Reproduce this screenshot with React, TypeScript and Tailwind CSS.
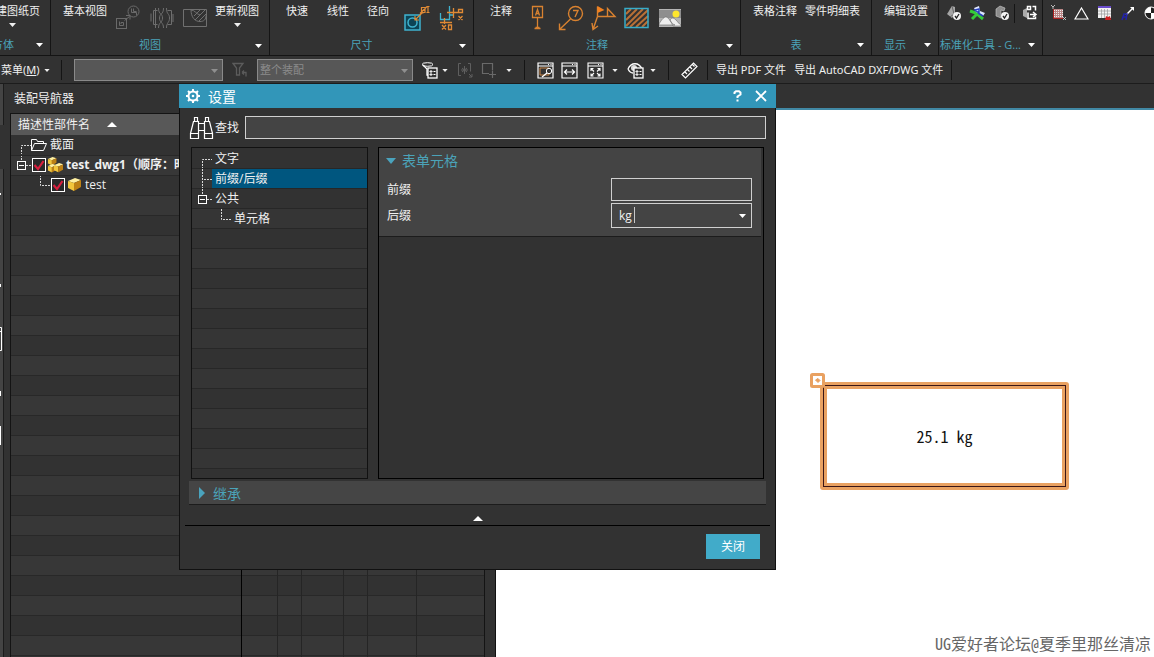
import React from "react";

type Kids = { children?: React.ReactNode };

function Svg({ w, h, children, className = "" }: Kids & { w: number; h: number; className?: string }) {
  return (
    <svg width={w} height={h} viewBox={`0 0 ${w} ${h}`} fill="none" aria-hidden="true" className={`shrink-0 ${className}`}>
      {children}
    </svg>
  );
}

function Down({ className = "" }: { className?: string }) {
  return (
    <Svg w={7} h={4} className={className}>
      <path d="M0 0h7L3.5 4z" fill="currentColor" />
    </Svg>
  );
}

/* ---------- ribbon ---------- */

function Group({ label, width, clip = false, children }: Kids & { label: string; width: string; clip?: boolean }) {
  return (
    <section aria-label={label} className={`flex shrink-0 flex-col overflow-hidden border-r border-[#151515] ${width}`}>
      <div className={`flex h-9 items-start ${clip ? "justify-end" : ""}`}>{children}</div>
      <div className={`flex h-5 items-center text-[#4ba3b9] ${clip ? "justify-end" : ""}`}>
        <span className={clip ? "mr-[15px]" : "flex-1 pl-px text-center"}>{label}</span>
        <button type="button" aria-label={`${label}选项`} className="flex h-full w-[21px] shrink-0 items-center justify-center text-white">
          <Down />
        </button>
      </div>
    </section>
  );
}

function TextButton({ text, arrow = false, className = "" }: { text: string; arrow?: boolean; className?: string }) {
  return (
    <button type="button" className={`flex shrink-0 flex-col items-center pt-[3px] leading-4 ${className}`}>
      {text}
      {arrow && <Down className="mt-1" />}
    </button>
  );
}

function IconButton({ name, className = "", children }: Kids & { name: string; className?: string }) {
  return (
    <button type="button" aria-label={name} className={`flex shrink-0 items-center justify-center ${className}`}>
      {children}
    </button>
  );
}

function Ribbon() {
  return (
    <div className="flex h-14 shrink-0 overflow-hidden border-b border-[#141414]">
      <Group label="方体" width="w-[51px]" clip>
        <TextButton text="新建图纸页" arrow className="mr-[10px]" />
      </Group>

      <Group label="视图" width="w-[219px]">
        <TextButton text="基本视图" className="ml-3" />
        <IconButton name="投影视图" className="ml-[3px] h-9 w-9">
          <Svg w={26} h={26}>
            <g stroke="#6a6a6a">
              <rect x="1.5" y="13.500" width="10" height="10" />
              <path d="M4.500 16.500v4h4v-3h-2.500v1.500M9.500 15.500l5-4M11 10.500h4v4" />
              <circle cx="18.500" cy="6.500" r="5.500" />
              <path d="M16.500 3.500v4h5v3M18.500 3.500v3h3" />
            </g>
          </Svg>
        </IconButton>
        <IconButton name="局部放大图" className="h-9 w-8">
          <Svg w={24} h={24}>
            <path d="M7.500 4.500h-4v14h4M1 7.500v8M5.500 2v20M8.500 2c0 7 4 5 4 10s-4 4-4 10M13.500 2c0 7-4 5-4 10s4 4 4 10M16.500 2c0 7 3 5 3 10s-3 4-3 10M17.500 4.500h4v14h-4M23 8v8" stroke="#6e6e6e" />
          </Svg>
        </IconButton>
        <IconButton name="剖视图" className="h-9 w-[34px]">
          <Svg w={26} h={20}>
            <path d="M1.500 1.500h23v17h-23zM9 1.500c0 8 4 12 9 12 4 0 6-2 6-6M12 8l6-6M13 12l10-10M17 13l7-7M9 2c4 0 5 4 9 5" stroke="#707070" />
          </Svg>
        </IconButton>
        <TextButton text="更新视图" arrow className="ml-[3px]" />
      </Group>

      <Group label="尺寸" width="w-[204px]">
        <TextButton text="快速" className="ml-4" />
        <TextButton text="线性" className="ml-[19px]" />
        <TextButton text="径向" className="ml-[18px]" />
        <IconButton name="孔尺寸" className="ml-[10px] h-9 w-9">
          <Svg w={26} h={26}>
            <rect x="1" y="10" width="15" height="15" fill="#0d4455" stroke="#3fb3cf" strokeWidth="1.500" />
            <circle cx="8.500" cy="17.500" r="4.500" stroke="#3fb3cf" strokeWidth="1.500" />
            <path d="M11 15l7-7M11 11v4h4M17.500 8h2M16 8.500l7-7M17.500 2.500h3.500v5h-3.500zM22.500 1.500h3M24 1.500v6M22.500 7.500h3" stroke="#e08a35" strokeWidth="1.200" />
          </Svg>
        </IconButton>
        <IconButton name="坐标尺寸" className="h-9 w-[34px]">
          <Svg w={26} h={26}>
            <path d="M1.500 8v6.500h9V1M10.500 10h4" stroke="#3fb3cf" strokeWidth="1.300" />
            <path d="M8 7.500h12M14.500 3v10M5.500 13v6M1 17.500h12M3 20l4 4.500M7 20l-4 4.500M9.500 20h3v4.500h-3zM19.500 4.500h4v3h-4zM19.500 11l4 4M23.500 11l-4 4" stroke="#e08a35" strokeWidth="1.300" />
          </Svg>
        </IconButton>
      </Group>

      <Group label="注释" width="w-[267px]">
        <TextButton text="注释" className="ml-4" />
        <IconButton name="基准特征符号" className="ml-[10px] h-9 w-8">
          <Svg w={14} h={26}>
            <path d="M1.500 1.500h10v11h-10zM6.500 12.500v11M3.500 23.500h6M4.500 22.500h4M4.500 10.500l2-6 2 6M5 8.500h3" stroke="#d98230" strokeWidth="1.300" />
          </Svg>
        </IconButton>
        <IconButton name="符号标注" className="h-9 w-[34px]">
          <Svg w={26} h={26}>
            <circle cx="17.500" cy="8.500" r="7" stroke="#d98230" strokeWidth="1.400" />
            <path d="M12.500 14L1.500 24.500M1.500 18.500v6h6M15 5.500h5l-3 6.500" stroke="#d98230" strokeWidth="1.400" />
          </Svg>
        </IconButton>
        <IconButton name="焊接符号" className="h-9 w-8">
          <Svg w={26} h={26}>
            <path d="M7 11.500H24L16.500 3.500v8M6.500 11.500L2 24.500M1 18l1 6.500 5-3.500M6.500 11.500v-10" stroke="#d98230" strokeWidth="1.400" />
            <path d="M6.500 1l7 4-7 3z" fill="#f08020" />
          </Svg>
        </IconButton>
        <IconButton name="剖面线" className="h-9 w-[34px]">
          <Svg w={26} h={22}>
            <path d="M2 7l5-5M2 13L13 2M2 19L19 2M6 20L24 3M12 20L24 9M18 20l6-6" stroke="#b97036" strokeWidth="2" />
            <rect x="1" y="1.500" width="23" height="19" stroke="#38adc9" strokeWidth="1.500" />
          </Svg>
        </IconButton>
        <IconButton name="图像" className="h-9 w-8">
          <Svg w={22} h={18}>
            <rect width="22" height="18" fill="#b4b4b4" />
            <rect y="1" width="22" height="8" fill="#8e8e8e" />
            <circle cx="17" cy="5" r="3.500" fill="#ffe62e" />
            <path d="M0 15c3-5 5-7 7-7 3 0 5 7 9 8H0zM11 11c2-3 4-2 6 0 2 2 3 4 5 5v1H14z" fill="#eee" stroke="#666" strokeWidth=".6" />
          </Svg>
        </IconButton>
      </Group>

      <Group label="表" width="w-[131px]">
        <TextButton text="表格注释" className="ml-3" />
        <TextButton text="零件明细表" className="ml-2" />
      </Group>

      <Group label="显示" width="w-[67px]">
        <TextButton text="编辑设置" className="ml-3" />
      </Group>

      <Group label="标准化工具 - G..." width="w-[104px]">
        <IconButton name="检查制图标准" className="ml-[3px] h-[26px] w-6">
          <Svg w={16} h={16}>
            <path d="M1 9C3 6 4 4 6 1l3 1v7l-3 4z" fill="#a5a5a5" />
            <path d="M6 1l2 8-4 3" stroke="#666" />
            <circle cx="11" cy="11" r="4" fill="#f4f4f4" />
            <path d="M9 11l1.500 2 2.500-4" stroke="#222" strokeWidth="1.300" />
          </Svg>
        </IconButton>
        <IconButton name="装配工具" className="h-[26px] w-6">
          <Svg w={18} h={16}>
            <path d="M1 6l6 2 7 6M3 14l6-6" stroke="#35c93a" strokeWidth="3" />
            <path d="M5 3l5-2 1 5 5 2-2 3-7-4z" fill="#dfe8ff" />
            <path d="M6 5l4-1v4zM9 8l5 3" stroke="#2741bd" strokeWidth="1.500" />
          </Svg>
        </IconButton>
        <IconButton name="检查部件" className="h-[26px] w-6">
          <Svg w={16} h={16}>
            <path d="M2 4l4-3 5 2-1 3-3-1v8L2 11z" fill="#8c8c8c" stroke="#ccc" strokeWidth=".6" />
            <circle cx="11" cy="11" r="4" fill="#f4f4f4" />
            <path d="M9 11l1.500 2 2.500-4" stroke="#222" strokeWidth="1.300" />
          </Svg>
        </IconButton>
        <span className="mt-1 h-[19px] w-px bg-[#151515]" />
        <IconButton name="替换模板" className="ml-[2px] h-[26px] w-[25px]">
          <Svg w={16} h={16}>
            <path d="M5 3L1 5v6l4 2z" fill="#aaa" />
            <path d="M5.500 1.500h3v3h-3zM10.500 1.500h3v4M6 7.500v6h7.500v-2M8 9.500h5M11 7l3 2.500-3 2.500" stroke="#fff" strokeWidth="1.500" />
          </Svg>
        </IconButton>
      </Group>

      <div className="flex h-[26px] min-w-0 flex-1 items-center overflow-hidden">
        <IconButton name="点阵" className="ml-[3px] w-6">
          <Svg w={15} h={16}>
            <path d="M0 0l2 2 2-2M2 2v2M12 12l3 3M15 12l-3 3" stroke="#ddd" strokeWidth=".8" />
            <rect x="3" y="4" width="9" height="9" fill="#b88" />
            <path d="M3 5.500h9M3 7.500h9M3 9.500h9M3 11.500h9" stroke="#eee" strokeDasharray="1 1" />
            <path d="M2.500 4v9.500H12" stroke="#a22" />
          </Svg>
        </IconButton>
        <IconButton name="三角形" className="w-[23px]">
          <Svg w={15} h={13}>
            <path d="M7.500 1l6.500 11H1z" stroke="#fff" strokeWidth="1.200" />
          </Svg>
        </IconButton>
        <IconButton name="表格" className="w-[23px]">
          <Svg w={14} h={15}>
            <rect width="13" height="12" fill="#f3f3f3" />
            <rect width="13" height="2" fill="#6a4ccc" />
            <path d="M0 5h13M0 8h13M3.500 3v9M6.500 3v9M9.500 3v9" stroke="#999" strokeWidth=".7" />
            <path d="M7 14l1-4 2 1 2-1 1 4z" fill="#c22" />
          </Svg>
        </IconButton>
        <IconButton name="引线" className="w-[23px]">
          <Svg w={14} h={15}>
            <path d="M5 9l7-7" stroke="#fff" strokeWidth="1.500" />
            <path d="M9 1h4v4z" fill="#fff" />
            <path d="M1 14L3 8h3l-1 6M2 11h4" stroke="#2222a8" strokeWidth="1.500" />
          </Svg>
        </IconButton>
        <IconButton name="重心" className="w-[23px]">
          <Svg w={14} h={14}>
            <circle cx="7" cy="7" r="6" fill="#fff" stroke="#fff" />
            <path d="M7 7V1.500A5.500 5.500 0 0 1 12.500 7zM7 7v5.500A5.500 5.500 0 0 1 1.500 7z" fill="#222" />
          </Svg>
        </IconButton>
      </div>
    </div>
  );
}

/* ---------- selection toolbar ---------- */

function Sep({ className = "" }: { className?: string }) {
  return <span className={`h-5 w-px shrink-0 bg-[#151515] ${className}`} />;
}

function ArrowButton({ name, className }: { name: string; className: string }) {
  return (
    <IconButton name={name} className={`h-6 ${className}`}>
      <Down className="h-[3px] w-[6px]" />
    </IconButton>
  );
}

function DisabledSelect({ name, value, className }: { name: string; value: string; className: string }) {
  return (
    <div className={`relative shrink-0 ${className}`}>
      <select aria-label={name} disabled defaultValue={value} className="block h-[22px] w-full appearance-none border border-[#8a8a8a] bg-[#575757] pl-[2px] text-[11px] text-[#8c8c8c] opacity-100">
        <option value={value}>{value}</option>
      </select>
      <Down className="pointer-events-none absolute top-[10px] right-[5px] text-[#8f8f8f]" />
    </div>
  );
}

function Toolbar() {
  return (
    <div className="flex h-7 shrink-0 items-center overflow-hidden border-b border-[#1c1c1c] pt-px font-['Noto_Sans','Noto_Sans_CJK_SC',sans-serif]">
      <button type="button" className="flex w-[61px] shrink-0 items-center gap-1 pl-px">
        <span>
          菜单(<u>M</u>)
        </span>
        <Down className="h-[3px] w-[6px]" />
      </button>
      <Sep />
      <DisabledSelect name="类型过滤器" value="" className="ml-3 w-[149px]" />
      <IconButton name="重置过滤器" className="h-6 w-[34px]">
        <Svg w={16} h={16}>
          <path d="M1 1.500h10L7.500 6v7h-3V6zM10 10.500h4v4M10 10.500l2-2M10 10.500l2 2" stroke="#5c5c5c" strokeWidth="1.300" />
        </Svg>
      </IconButton>
      <DisabledSelect name="选择范围" value="整个装配" className="w-[156px]" />
      <IconButton name="过滤器" className="ml-1 h-6 w-6">
        <Svg w={17} h={17}>
          <path d="M2 3l4 4v6h2" stroke="#fff" strokeWidth="1.300" />
          <ellipse cx="6.500" cy="2.500" rx="5.500" ry="1.800" stroke="#fff" />
          <rect x="7" y="6" width="9" height="10" stroke="#fff" fill="#323232" strokeWidth="1.300" />
          <path d="M9 9h2v1H9zM9 12h2v1H9zM12.500 9.500h2M12.500 12.500h2" stroke="#fff" />
        </Svg>
      </IconButton>
      <ArrowButton name="过滤器选项" className="w-2" />
      <IconButton name="捕捉范围" className="ml-1 h-6 w-6">
        <Svg w={17} h={17}>
          <path d="M4 1.500H1.500v12H4M11 1.500h2.500v8M7.500 4v8M4 8h7M5 6l5 4M10 6l-5 4M12 12l3 3M15 12v3h-3" stroke="#5f5f5f" />
        </Svg>
      </IconButton>
      <IconButton name="矩形选择" className="h-6 w-6">
        <Svg w={17} h={17}>
          <path d="M8 11.500H1.500v-10h10v7M11.500 9v7M8 12.500h7" stroke="#6a6a6a" strokeWidth="1.200" />
        </Svg>
      </IconButton>
      <ArrowButton name="选择方式" className="w-4" />
      <Sep className="ml-[7px]" />
      <IconButton name="窗口缩放" className="ml-2 h-6 w-6">
        <Svg w={17} h={17}>
          <path d="M1 1h15v15H1zM1 4h15" stroke="#fff" strokeWidth="1.200" />
          <path d="M11 2.500h1M13.500 2.500h1" stroke="#fff" />
          <path d="M3 6h9v7H3z" stroke="#c98546" />
          <circle cx="12" cy="9" r="2.700" fill="#323232" stroke="#fff" />
          <path d="M10 11l-5 4" stroke="#fff" strokeWidth="1.500" />
        </Svg>
      </IconButton>
      <IconButton name="适合宽度" className="h-6 w-6">
        <Svg w={17} h={17}>
          <path d="M1 1h15v15H1zM1 4h15M4 10h9M6 7.500L3.500 10 6 12.500M11 7.500l2.500 2.500-2.500 2.500" stroke="#fff" strokeWidth="1.200" />
          <path d="M11 2.500h1M13.500 2.500h1" stroke="#fff" />
        </Svg>
      </IconButton>
      <IconButton name="适合窗口" className="ml-[2px] h-6 w-6">
        <Svg w={17} h={17}>
          <path d="M1 1h15v15H1zM1 4h15M4 9V6.500h2.500M13 9V6.500h-2.500M4 11.500V14h2.500M13 11.500V14h-2.500M4 6.500l3 3M13 6.500l-3 3M4 14l3-3M13 14l-3-3" stroke="#fff" strokeWidth="1.100" />
          <path d="M11 2.500h1M13.500 2.500h1" stroke="#fff" />
        </Svg>
      </IconButton>
      <ArrowButton name="缩放选项" className="w-4" />
      <IconButton name="显示和隐藏" className="h-6 w-6">
        <Svg w={17} h={17}>
          <path d="M1 7c3-7 11-7 14 0M1 7c1 2 3 4 5 4" stroke="#fff" strokeWidth="1.300" />
          <circle cx="7" cy="6" r="3" fill="#ddd" />
          <rect x="7" y="6" width="9" height="10" stroke="#fff" fill="#323232" strokeWidth="1.300" />
          <path d="M9 9h2v1H9zM9 12h2v1H9zM12.500 9.500h2M12.500 12.500h2" stroke="#fff" />
        </Svg>
      </IconButton>
      <ArrowButton name="显示选项" className="w-3" />
      <Sep className="ml-[9px]" />
      <IconButton name="测量" className="ml-2 h-6 w-6">
        <Svg w={17} h={17}>
          <path d="M1 12.500L12.500 1 16 4.500 4.500 16zM4 10l2 2M6.500 7.500l2 2M9 5l2 2M11.500 2.500l2 2" stroke="#fff" strokeWidth="1.200" />
        </Svg>
      </IconButton>
      <Sep className="ml-[6px]" />
      <button type="button" className="ml-2 shrink-0">导出 PDF 文件</button>
      <button type="button" className="ml-2 shrink-0">导出 AutoCAD DXF/DWG 文件</button>
      <Sep className="ml-2" />
    </div>
  );
}

/* ---------- assembly navigator ---------- */

function Dash({ d, w }: { d: string; w: number }) {
  return (
    <Svg w={w} h={20}>
      <path d={d} stroke="#d8d8d8" strokeDasharray="2 1" />
    </Svg>
  );
}

function Minus() {
  return (
    <>
      <rect x="6.500" y="6.500" width="8" height="8" stroke="#fff" />
      <path d="M8 10.500h5" stroke="#fff" />
    </>
  );
}

function Tick({ name }: { name: string }) {
  return (
    <label className="relative block size-[14px] shrink-0">
      <input type="checkbox" defaultChecked aria-label={name} className="peer block size-[14px] appearance-none border border-white bg-[#2a2a2a]" />
      <svg viewBox="0 0 14 14" className="pointer-events-none absolute inset-0 hidden size-[14px] peer-checked:block" fill="none">
        <path d="M2.500 7l3.500 4 5.500-8" stroke="#d81f3e" strokeWidth="2.200" />
      </svg>
    </label>
  );
}

function Cube({ x = 0, y = 0, s = 1 }: { x?: number; y?: number; s?: number }) {
  return (
    <g transform={`translate(${x} ${y}) scale(${s})`}>
      <path d="M0 3l7-3 6 2-7 3z" fill="#fff0a0" />
      <path d="M0 3l6 2v8l-6-3z" fill="#f2c63c" />
      <path d="M6 5l7-3v7l-7 4z" fill="#bd8115" />
    </g>
  );
}

const treeRows: React.ReactNode[] = [
  <div key="a" className="flex h-[19px] items-center overflow-hidden">
    <Dash w={20} d="M10.500 20V10.500H20" />
    <Svg w={16} h={14}>
      <path d="M.5 12.500v-11h5l1 2h6v2M.5 12.500l3-7h12l-3 7z" stroke="#fff" />
    </Svg>
    <span className="ml-[3px]">截面</span>
  </div>,
  <div key="b" className="flex h-[19px] items-center">
    <Svg w={21} h={20}>
      <path d="M10.500 0v6M15 10.500h6" stroke="#d8d8d8" strokeDasharray="2 1" />
      <Minus />
    </Svg>
    <Tick name="test_dwg1" />
    <Svg w={16} h={16} className="ml-px">
      <Cube x={1} y={0} s={0.65} />
      <Cube x={1} y={7} s={0.65} />
      <Cube x={7} y={6} s={0.72} />
    </Svg>
    <span className="ml-[3px] font-bold whitespace-nowrap">test_dwg1（顺序：时间顺序）</span>
  </div>,
  <div key="c" className="flex h-[19px] items-center">
    <Dash w={40} d="M29.500 0V10.500H40" />
    <Tick name="test" />
    <Svg w={14} h={14} className="ml-[3px]">
      <Cube />
    </Svg>
    <span className="ml-[3px]">test</span>
  </div>,
];

const bodyRows = Array.from({ length: 28 }, (_, i) => treeRows[i] ?? null);

function Navigator() {
  return (
    <aside className="flex w-[496px] shrink-0 overflow-hidden border-r border-[#111]">
      <div className="flex w-1 shrink-0 flex-col">
        <div className="h-[41px] border-r border-[#1c1c1c] bg-[#444]" />
        <div className="h-11" />
        <div className="flex-1 border-r border-[#1c1c1c] bg-[#444]">
          <Svg w={3} h={290}>
            <path d="M0 24h1v2H0zM0 115h1v3H0zM0 222h1v5H0zM0 257h1v19H0z" fill="#fff" />
            <path d="M0 158.500h1.500v23H0M0 162.500h1.500" stroke="#fff" />
          </Svg>
        </div>
      </div>
      <div className="flex min-w-0 flex-1 flex-col pr-[10px] pl-[6px]">
        <h2 className="flex h-[29px] shrink-0 items-center pl-1 text-[12px]">装配导航器</h2>
        <div className="min-h-0 flex-1 overflow-hidden border-x border-t border-[#141414]">
          <table className="w-full table-fixed border-collapse text-left text-[12px] leading-4">
            <colgroup>
              <col className="w-[230px]" />
              <col className="w-9" />
              <col className="w-6" />
              <col className="w-[42px]" />
              <col className="w-6" />
              <col className="w-[49px]" />
              <col />
            </colgroup>
            <thead>
              <tr className="h-[21px] bg-[#585858]">
                <th scope="col" className="p-0 font-normal">
                  <button type="button" className="flex h-[21px] items-center pl-[7px]">
                    描述性部件名
                    <Svg w={10} h={5} className="ml-[17px]">
                      <path d="M5 0l5 5H0z" fill="#fff" />
                    </Svg>
                  </button>
                </th>
                <td colSpan={6} />
              </tr>
            </thead>
            <tbody>
              {bodyRows.map((row, i) => (
                <tr key={i} className="h-5 border-b border-[#282828] odd:bg-[#323232] even:bg-[#373737]">
                  <td className="overflow-hidden border-r border-black p-0">{row}</td>
                  <td className="border-r border-[#252525] p-0" />
                  <td className="border-r border-[#252525] p-0" />
                  <td className="border-r border-[#252525] p-0" />
                  <td className="border-r border-[#252525] p-0" />
                  <td className="border-r border-[#252525] p-0" />
                  <td className="p-0" />
                </tr>
              ))}
            </tbody>
          </table>
        </div>
      </div>
    </aside>
  );
}

/* ---------- settings dialog ---------- */

function SettingsTree() {
  const rows: React.ReactNode[] = [
    <>
      <Dash w={22} d="M10.500 20V10.500H20" />
      <span className="pl-px">文字</span>
    </>,
    <>
      <Dash w={20} d="M10.500 0V20M12 10.500H20" />
      <span className="flex h-[19px] flex-1 items-center bg-[#00567f] pl-[3px]">前缀/后缀</span>
    </>,
    <>
      <Svg w={22} h={20}>
        <path d="M10.500 0v6M15 10.500h5" stroke="#d8d8d8" strokeDasharray="2 1" />
        <Minus />
      </Svg>
      <span className="pl-px">公共</span>
    </>,
    <>
      <Dash w={41} d="M29.500 0V10.500H39" />
      <span className="pl-px">单元格</span>
    </>,
  ];
  return (
    <ul aria-label="设置类别" className="w-[177px] shrink-0 overflow-hidden border border-[#111] pt-px leading-4">
      {Array.from({ length: 17 }, (_, i) => (
        <li key={i} className="flex h-5 items-center overflow-hidden border-b border-[#272727] odd:bg-[#323232] even:bg-[#353535]">
          {rows[i]}
        </li>
      ))}
    </ul>
  );
}

function SettingsDialog() {
  return (
    <div role="dialog" aria-labelledby="dlg" className="absolute top-0 left-[179px] flex w-[597px] flex-col border-x border-b border-[#111] bg-[#323232] text-[12px]">
      <header className="-mx-px flex h-6 items-center bg-[#3296b9] pr-1 pl-[7px] text-white">
        <Svg w={14} h={14}>
          <circle cx="7" cy="7" r="4.500" stroke="#fff" strokeWidth="2" />
          <circle cx="7" cy="7" r="1.300" fill="#fff" />
          <path d="M7 0v2M7 12v2M0 7h2M12 7h2M2 2l1.500 1.500M10.500 10.500L12 12M12 2l-1.500 1.500M3.500 10.500L2 12" stroke="#fff" strokeWidth="2" />
        </Svg>
        <h1 id="dlg" className="ml-2 flex-1 text-[14px]">设置</h1>
        <button type="button" aria-label="帮助" className="flex size-[23px] items-center justify-center">
          <Svg w={9} h={12}>
            <path d="M1.500 4V2.500L3 1.200h3l1.500 1.300v2L4.500 6.500V8" stroke="#fff" strokeWidth="2" />
            <path d="M3.500 9.500h2v2h-2z" fill="#fff" />
          </Svg>
        </button>
        <button type="button" aria-label="关闭窗口" className="flex size-[23px] items-center justify-center">
          <Svg w={12} h={12}>
            <path d="M1 1l10 10M11 1L1 11" stroke="#fff" strokeWidth="1.800" />
          </Svg>
        </button>
      </header>

      <div className="mt-2 flex h-[23px] items-center pr-[9px] pl-[9px]">
        <Svg w={25} h={24}>
          <path d="M1.500 17.500h8v5h-8zM15.500 17.500h8v5h-8zM1.500 17.500l3-12h5v12M23.500 17.500l-3-12h-5v12M5.500 5.500v-4h3v4M16.500 5.500v-4h3v4M9.500 7.500h6M9.500 14.500h6" stroke="#fff" strokeWidth="1.200" />
        </Svg>
        <label htmlFor="find" className="w-[31px] shrink-0 pl-px">查找</label>
        <input id="find" type="text" className="h-[23px] min-w-0 flex-1 border border-[#d0d0d0] bg-[#444] px-2 outline-none" />
      </div>

      <div className="mt-2 mr-[11px] ml-[11px] flex h-[332px] gap-[10px]">
        <SettingsTree />
        <div className="min-w-0 flex-1 border border-black pr-[2px]">
          <section className="border-b border-[#1c1c1c] bg-[#444] pt-px pb-2">
            <h3>
              <button type="button" className="flex h-[23px] items-center pl-[7px] text-[14px] text-[#4ba3b9]">
                <Svg w={10} h={6} className="mr-[6px]">
                  <path d="M0 0h10L5 6z" fill="#4aa3bd" />
                </Svg>
                表单元格
              </button>
            </h3>
            <div className="mt-[6px] flex items-center justify-between pr-[9px] pl-2">
              <label htmlFor="prefix">前缀</label>
              <input id="prefix" type="text" className="h-[23px] w-[141px] border border-[#d0d0d0] bg-[#444] px-2 outline-none" />
            </div>
            <div className="mt-[2px] flex items-center justify-between pr-[9px] pl-2">
              <label htmlFor="suffix">后缀</label>
              <div className="relative flex h-[25px] w-[141px] items-center border border-[#d0d0d0] bg-[#444]">
                <input id="suffix" type="text" defaultValue="kg" className="h-full min-w-0 flex-1 bg-transparent pl-[7px] outline-none" />
                <span className="pointer-events-none absolute top-[3px] left-[22px] h-4 w-px bg-[#c8c8c8]" />
                <button type="button" aria-label="后缀列表" className="flex h-full w-[18px] items-center justify-center text-white">
                  <Down />
                </button>
              </div>
            </div>
          </section>
        </div>
      </div>

      <button type="button" className="mx-[9px] mt-[2px] flex h-6 items-center border-b border-[#1c1c1c] bg-[#454545] pt-px pl-[10px] text-[14px] text-[#4ba3b9]">
        <Svg w={6} h={12} className="mr-2">
          <path d="M0 0l6 6-6 6z" fill="#4aa3bd" />
        </Svg>
        继承
      </button>

      <button type="button" aria-label="收起" className="flex h-5 items-center justify-center pt-[6px]">
        <Svg w={10} h={5}>
          <path d="M5 0l5 5H0z" fill="#fff" />
        </Svg>
      </button>
      <div className="mx-[5px] h-px bg-black" />
      <footer className="flex justify-end pt-2 pr-[15px] pb-[10px]">
        <button type="button" className="h-[25px] w-[54px] bg-[#41abc9] text-white">关闭</button>
      </footer>
    </div>
  );
}

/* ---------- drawing ---------- */

function Drawing() {
  return (
    <section aria-label="图纸" className="flex min-w-0 flex-1 flex-col">
      <div className="h-6 shrink-0" />
      <div className="relative min-h-0 flex-1 overflow-hidden border-t-2 border-[#4189a5] bg-white font-['Noto_Sans_CJK_SC',sans-serif] text-[16px]">
        <div className="absolute top-[272px] left-[324px] h-[108px] w-[249px] rounded-[3px] border-[3px] border-[#e9a161]">
          <div className="h-full border border-[#3a1515]">
            <div className="flex h-full items-center justify-center border-[3px] border-[#e9a161] text-[#111] [font-feature-settings:'hwid']">
              25.1 kg
            </div>
          </div>
        </div>
        <Svg w={15} h={15} className="absolute top-[263px] left-[314px]">
          <rect x="1.500" y="1.500" width="12" height="12" rx="1" fill="#fff" stroke="#e9a161" strokeWidth="3" />
          <path d="M5.500 7l2.500-1.500 2 2-2 2z" fill="#e9a161" stroke="#e9a161" />
        </Svg>
        <p className="absolute right-[3px] bottom-[2px] leading-[24px] whitespace-nowrap text-[#666] [font-feature-settings:'hwid']">
          UG爱好者论坛@夏季里那丝清凉
        </p>
      </div>
    </section>
  );
}

export default function App() {
  return (
    <div className="flex h-screen flex-col overflow-hidden bg-[#323232] font-['Open_Sans','Noto_Sans_CJK_SC',sans-serif] text-[11px] whitespace-nowrap text-[#f0f0f0]">
      <Ribbon />
      <Toolbar />
      <main className="relative flex min-h-0 flex-1">
        <Navigator />
        <Drawing />
        <SettingsDialog />
      </main>
    </div>
  );
}
